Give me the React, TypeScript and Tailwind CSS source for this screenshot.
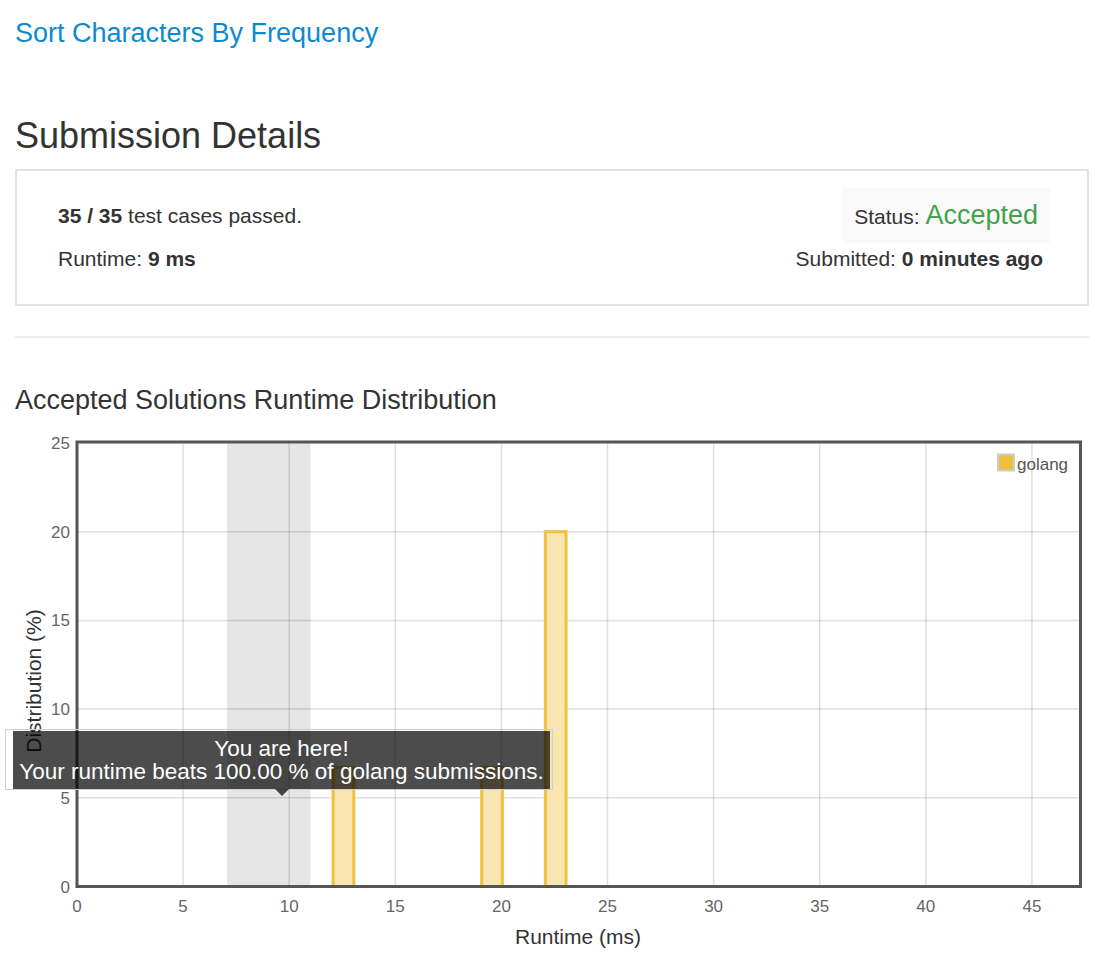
const X0 = 77;
const PX = 21.22;
const Y0 = 885.5;
const PY = 17.74;
const PLOT_RIGHT = 1080.5;
const PLOT_TOP = 441;

const xAt = (v: number) => X0 + v * PX;
const yAt = (v: number) => Y0 - v * PY;

const xTicks = [0, 5, 10, 15, 20, 25, 30, 35, 40, 45];
const yTicks = [0, 5, 10, 15, 20, 25];

const bars = [
  { from: 12, to: 13, value: 6.7 },
  { from: 19, to: 20, value: 6.7 },
  { from: 22, to: 23, value: 20 },
];

const RuntimeChart = () => {
  return (
    <div className="relative w-[1095px] h-[541px]">
      <svg width={1095} height={541} viewBox="0 414 1095 541" className="block">
        {/* your runtime band */}
        <rect x={xAt(7.07)} y={PLOT_TOP} width={xAt(11) - xAt(7.07)} height={Y0 - PLOT_TOP} fill="#e6e6e6" />

        {/* grid */}
        {xTicks.slice(1).map(t => (
          <line key={'gx' + t} x1={xAt(t)} x2={xAt(t)} y1={PLOT_TOP} y2={Y0} stroke="rgba(0,0,0,0.13)" strokeWidth={1.5} />
        ))}
        {yTicks.slice(1, -1).map(t => (
          <line key={'gy' + t} x1={X0} x2={PLOT_RIGHT} y1={yAt(t)} y2={yAt(t)} stroke="rgba(0,0,0,0.13)" strokeWidth={1.5} />
        ))}

        {/* bars */}
        {bars.map(b => (
          <rect
            key={b.from}
            x={xAt(b.from) + 1.5}
            y={yAt(b.value)}
            width={xAt(b.to) - xAt(b.from) - 0.5}
            height={Y0 - yAt(b.value)}
            fill="#f9e5b2"
            stroke="#f0c13a"
            strokeWidth={3}
          />
        ))}

        {/* frame */}
        <rect x={X0} y={PLOT_TOP} width={PLOT_RIGHT - X0} height={Y0 - PLOT_TOP} fill="none" stroke="#555" strokeWidth={3} />

        {/* tick labels */}
        <g fontFamily="'Liberation Sans', Arial, sans-serif" fontSize={17} fill="#666">
          {yTicks.map(t => (
            <text key={'ly' + t} x={70} y={yAt(t) + 6} textAnchor="end">
              {t}
            </text>
          ))}
          {xTicks.map(t => (
            <text key={'lx' + t} x={xAt(t)} y={911} textAnchor="middle">
              {t}
            </text>
          ))}
        </g>

        {/* axis titles */}
        <g fontFamily="'Liberation Sans', Arial, sans-serif" fontSize={21} fill="#333">
          <text x={578} y={943} textAnchor="middle">
            Runtime (ms)
          </text>
          <text x={0} y={0} textAnchor="middle" transform="translate(41 680) rotate(-90)">
            Distribution (%)
          </text>
        </g>

        {/* legend */}
        <rect x={998} y={453.5} width={16} height={16} fill="#ecc13d" stroke="#cccccc" strokeWidth={2} />
        <text x={1017} y={469} fontFamily="'Liberation Sans', Arial, sans-serif" fontSize={17} fill="#555">
          golang
        </text>
      </svg>

      {/* tooltip */}
      <div className="absolute left-[5px] top-[314px] w-[548px] h-[61px] border border-[#cfcfcf]">
        <div className="absolute left-[7px] right-[2px] top-[1px] h-[58px] bg-black/70 pt-[6px] text-center text-white text-[22.5px] leading-[23px] whitespace-nowrap">
          <div>You are here!</div>
          <div>Your runtime beats 100.00 % of golang submissions.</div>
        </div>
      </div>
      <div className="absolute left-[275px] top-[374px] w-0 h-0 border-l-[7px] border-r-[7px] border-t-[7px] border-l-transparent border-r-transparent border-t-black/70" />
    </div>
  );
};

export default function App() {
  return (
    <div className="min-h-[955px] bg-white text-[#333] font-['Liberation_Sans',Arial,sans-serif]">
      <div className="w-[1074px] ml-[15px]">
        <div className="pt-[18px]">
          <a className="text-[27px] leading-[30px] text-[#0c8ad0]">Sort Characters By Frequency</a>
        </div>

        <h2 className="mt-[67px] text-[36px] leading-[40px] text-[#333]">Submission Details</h2>

        {/* Result panel */}
        <div className="mt-[13px] border-2 border-[#e2e2e2] flex justify-between items-start pt-[17px] pb-[30px] pl-[41px] pr-[37px] text-[21px]">
          <div className="pt-[13px]">
            <div className="leading-[30px]">
              <b>35 / 35</b> test cases passed.
            </div>
            <div className="mt-[13px] leading-[30px]">
              Runtime: <b>9 ms</b>
            </div>
          </div>
          <div className="flex flex-col items-end">
            <div className="bg-[#fafafa] px-3 pt-3 pb-[11px] leading-[30px]">
              Status: <span className="text-[27px] text-[#43a34a]">Accepted</span>
            </div>
            <div className="mt-[1px] mr-[7px] leading-[30px]">
              Submitted: <b>0 minutes ago</b>
            </div>
          </div>
        </div>

        <div className="mt-[30px] h-[2px] bg-[#eeeeee]" />

        <h3 className="mt-[47px] text-[27px] leading-[30px] text-[#333]">Accepted Solutions Runtime Distribution</h3>
      </div>

      <RuntimeChart />
    </div>
  );
}
